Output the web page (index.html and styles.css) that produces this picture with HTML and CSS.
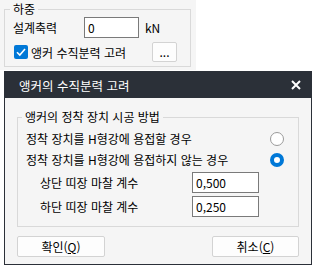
FILE: index.html
```html
<!DOCTYPE html>
<html lang="ko">
<head>
    <meta charset="UTF-8">
    <meta name="viewport" content="width=device-width, initial-scale=1.0">
    <title>앵커의 수직분력 고려</title>
    <link rel="stylesheet" href="styles.css">
</head>
<body>

    <div class="load-panel">
        <fieldset class="group group-load">
            <legend>하중</legend>
            <div class="row">
                <label class="row-label" for="axial">설계축력</label>
                <input type="text" id="axial" class="field field-short" value="0">
                <span class="unit">kN</span>
            </div>
            <div class="row row-check">
                <label class="check">
                    <span class="check-box">
                        <svg width="14" height="14" viewBox="0 0 14 14"><polyline points="3,7.2 5.8,10 11,4" fill="none" stroke="#fff" stroke-width="1.6"/></svg>
                    </span>
                    앵커 수직분력 고려
                </label>
                <button type="button" class="btn btn-more">...</button>
            </div>
        </fieldset>
    </div>

    <div class="dialog">
        <div class="dialog-title">
            <span>앵커의 수직분력 고려</span>
            <svg class="close" width="10" height="10" viewBox="0 0 10 10"><path d="M1 1L9 9M9 1L1 9" stroke="#fff" stroke-width="2"/></svg>
        </div>
        <div class="dialog-body">
            <fieldset class="group group-anchor">
                <legend>앵커의 정착 장치 시공 방법</legend>
                <div class="opt-row first">
                    <span>정착 장치를 H형강에 용접할 경우</span>
                    <span class="radio"></span>
                </div>
                <div class="opt-row">
                    <span>정착 장치를 H형강에 용접하지 않는 경우</span>
                    <span class="radio radio-on"></span>
                </div>
                <div class="coef-row top">
                    <label for="upper">상단 띠장 마찰 계수</label>
                    <input type="text" id="upper" class="field field-coef" value="0,500">
                </div>
                <div class="coef-row">
                    <label for="lower">하단 띠장 마찰 계수</label>
                    <input type="text" id="lower" class="field field-coef" value="0,250">
                </div>
            </fieldset>
            <div class="dialog-actions">
                <button type="button" class="btn btn-action">확인(<u>Q</u>)</button>
                <button type="button" class="btn btn-action btn-cancel">취소(<u>C</u>)</button>
            </div>
        </div>
    </div>

</body>
</html>
```

FILE: styles.css
```css
body {
    margin: 0;
    background: #fff;
    font-family: "Noto Sans CJK KR", "Noto Sans", sans-serif;
    font-size: 12px;
    color: #000;
}

/* top "하중" panel */
.load-panel {
    width: 196px;
    height: 70px;
    box-sizing: border-box;
    padding: 1px 5px 0 4px;
    background: #f5f5f5;
}

.group {
    margin: 0;
    min-width: 0;
    border: 1px solid #d9d9d9;
}

.group legend {
    padding: 0 3px;
    line-height: 16px;
}

.group-load {
    padding: 0 0 4px 5px;
}

.row {
    display: flex;
    align-items: center;
    height: 21px;
    padding-left: 3px;
}

.row-label {
    width: 71px;
}

.field {
    box-sizing: border-box;
    height: 21px;
    margin: 0;
    padding: 0 3px;
    border: 1px solid #7a7a7a;
    background: #fff;
    font-family: inherit;
    font-size: 12px;
    color: #000;
    outline: none;
}

.field-short {
    width: 55px;
}

.unit {
    margin-left: 6px;
}

.row-check {
    height: 20px;
    margin-top: 4px;
}

.check {
    display: flex;
    align-items: center;
    width: 139px;
}

.check-box {
    display: block;
    width: 14px;
    height: 14px;
    margin: 0 3px 0 1px;
    border-radius: 2px;
    background: #0078d7;
}

.check-box svg {
    display: block;
}

.btn {
    box-sizing: border-box;
    margin: 0;
    padding: 0;
    border: 1px solid #d3d3d3;
    border-radius: 2px;
    background: #fdfdfd;
    font-family: inherit;
    font-size: 12px;
    color: #000;
}

.btn-more {
    width: 25px;
    height: 20px;
    line-height: 14px;
}

/* dialog */
.dialog {
    width: 308px;
    box-sizing: border-box;
    margin: 1px 0 0 4px;
    border: 1px solid #2b3038;
    background: #f5f5f5;
}

.dialog-title {
    display: flex;
    align-items: center;
    justify-content: space-between;
    height: 26px;
    padding: 0 10px 0 14px;
    background: #2b3038;
    color: #fff;
    font-size: 12.5px;
}

.close {
    display: block;
}

.dialog-body {
    padding: 11px 12px 7px 12px;
}

.group-anchor {
    padding: 0 0 9px 4px;
}

.opt-row {
    display: flex;
    align-items: center;
    justify-content: space-between;
    height: 21px;
    padding: 0 14px 0 4px;
}

.opt-row.first {
    margin-top: 3px;
}

.radio {
    box-sizing: border-box;
    width: 14px;
    height: 14px;
    border: 1px solid #9a9a9a;
    border-radius: 50%;
    background: #fff;
}

.radio-on {
    border: 4px solid #0078d7;
}

.coef-row {
    display: flex;
    align-items: center;
    height: 21px;
    margin-top: 3px;
    padding-left: 18px;
}

.coef-row.top {
    margin-top: 2px;
}

.coef-row label {
    width: 152px;
}

.field-coef {
    width: 67px;
}

.dialog-actions {
    display: flex;
    justify-content: space-between;
    margin-top: 9px;
}

.btn-action {
    width: 88px;
    height: 21px;
}

.btn-cancel {
    width: 87px;
}
```
